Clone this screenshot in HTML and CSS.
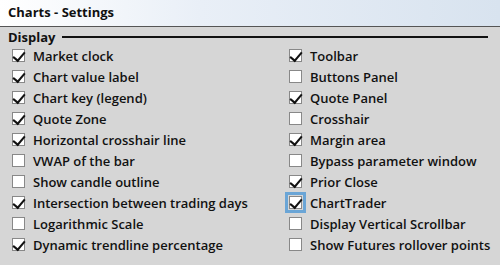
FILE: index.html
```html
<!DOCTYPE html>
<html>
<head>
<meta charset="utf-8">
<link rel="stylesheet" href="styles.css">
</head>
<body>
<div class="win">
  <div class="title">Charts - Settings</div>
  <div class="panel">
    <div class="legend"><span class="legend-text">Display</span><span class="legend-line"></span></div>
    <div class="grid">
      <div class="col">
        <label class="item"><span class="box on"></span>Market clock</label>
        <label class="item"><span class="box on"></span>Chart value label</label>
        <label class="item"><span class="box on"></span>Chart key (legend)</label>
        <label class="item"><span class="box on"></span>Quote Zone</label>
        <label class="item"><span class="box on"></span>Horizontal crosshair line</label>
        <label class="item"><span class="box"></span>VWAP of the bar</label>
        <label class="item"><span class="box"></span>Show candle outline</label>
        <label class="item"><span class="box on"></span>Intersection between trading days</label>
        <label class="item"><span class="box"></span>Logarithmic Scale</label>
        <label class="item"><span class="box on"></span>Dynamic trendline percentage</label>
      </div>
      <div class="col">
        <label class="item"><span class="box on"></span>Toolbar</label>
        <label class="item"><span class="box"></span>Buttons Panel</label>
        <label class="item"><span class="box on"></span>Quote Panel</label>
        <label class="item"><span class="box"></span>Crosshair</label>
        <label class="item"><span class="box on"></span>Margin area</label>
        <label class="item"><span class="box"></span>Bypass parameter window</label>
        <label class="item"><span class="box on"></span>Prior Close</label>
        <label class="item"><span class="box on focus"></span>ChartTrader</label>
        <label class="item"><span class="box"></span>Display Vertical Scrollbar</label>
        <label class="item"><span class="box"></span>Show Futures rollover points</label>
      </div>
    </div>
  </div>
</div>
</body>
</html>
```
FILE: styles.css
```css
html, body {
  margin: 0;
  padding: 0;
}
body {
  width: 500px;
  height: 265px;
  overflow: hidden;
  background: #d6d6d6;
  font-family: "Open Sans", "Liberation Sans", sans-serif;
  color: #111;
}
.win {
  display: flex;
  flex-direction: column;
}
.title {
  height: 27px;
  box-sizing: border-box;
  padding: 3px 0 0 8px;
  font-size: 13px;
  font-weight: 700;
  background: linear-gradient(to right, #ffffff 0%, #e9eff7 40%, #d8e3ef 100%);
  border-bottom: 1px solid #555;
}
.panel {
  padding: 1px 12px 0 8px;
}
.legend {
  display: flex;
  align-items: center;
  height: 17px;
}
.legend-text {
  font-size: 13px;
  font-weight: 700;
  margin-right: 6px;
}
.legend-line {
  flex: 1;
  height: 2px;
  background: #111;
}
.grid {
  display: grid;
  grid-template-columns: 277px 1fr;
  padding-left: 4px;
}
.col {
  display: flex;
  flex-direction: column;
}
.item {
  display: flex;
  align-items: center;
  height: 21px;
  font-size: 13px;
  font-weight: 600;
  white-space: nowrap;
}
.box {
  position: relative;
  width: 11px;
  height: 11px;
  border: 1px solid #888;
  background: #fff;
  margin-right: 8px;
  flex: none;
}
.box.on::after {
  content: "";
  position: absolute;
  left: 1px;
  top: -2px;
  width: 5px;
  height: 10px;
  border-right: 2px solid #111;
  border-bottom: 2px solid #111;
  transform: rotate(40deg) translate(2px, 0px);
}
.box.focus {
  outline: 3px solid #6aa5d6;
  outline-offset: 1px;
}
```
